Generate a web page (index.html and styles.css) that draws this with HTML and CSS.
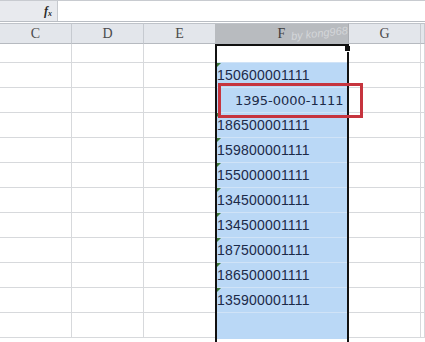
FILE: index.html
```html
<!DOCTYPE html>
<html>
<head>
<meta charset="utf-8">
<link rel="stylesheet" href="styles.css">
</head>
<body>
<div class="fbar">
  <div class="fx-box"><span class="fx">f<sub>x</sub></span></div>
  <div class="finput"></div>
</div>
<div class="gap"></div>
<div class="sheet">
  <div class="col w72">
    <div class="hdr">C</div>
    <div class="cell r1"></div>
    <div class="cell"></div><div class="cell"></div><div class="cell"></div><div class="cell"></div>
    <div class="cell"></div><div class="cell"></div><div class="cell"></div><div class="cell"></div>
    <div class="cell"></div><div class="cell"></div><div class="cell"></div>
  </div>
  <div class="col w72">
    <div class="hdr">D</div>
    <div class="cell r1"></div>
    <div class="cell"></div><div class="cell"></div><div class="cell"></div><div class="cell"></div>
    <div class="cell"></div><div class="cell"></div><div class="cell"></div><div class="cell"></div>
    <div class="cell"></div><div class="cell"></div><div class="cell"></div>
  </div>
  <div class="col w72">
    <div class="hdr">E</div>
    <div class="cell r1"></div>
    <div class="cell"></div><div class="cell"></div><div class="cell"></div><div class="cell"></div>
    <div class="cell"></div><div class="cell"></div><div class="cell"></div><div class="cell"></div>
    <div class="cell"></div><div class="cell"></div><div class="cell"></div>
  </div>
  <div class="col fcol">
    <div class="hdr hdr-sel">F<span class="wm">by kong968</span></div>
    <div class="fbody">
      <div class="fcell r1 active"></div>
      <div class="fcell num tri">150600001111</div>
      <div class="fcell num dash">1395-0000-1111</div>
      <div class="fcell num tri">186500001111</div>
      <div class="fcell num tri">159800001111</div>
      <div class="fcell num tri">155000001111</div>
      <div class="fcell num tri">134500001111</div>
      <div class="fcell num tri">134500001111</div>
      <div class="fcell num tri">187500001111</div>
      <div class="fcell num tri">186500001111</div>
      <div class="fcell num tri">135900001111</div>
      <div class="fcell last"></div>
      <div class="handle"></div>
      <div class="redbox"></div>
    </div>
  </div>
  <div class="col w72">
    <div class="hdr">G</div>
    <div class="cell r1"></div>
    <div class="cell"></div><div class="cell"></div><div class="cell"></div><div class="cell"></div>
    <div class="cell"></div><div class="cell"></div><div class="cell"></div><div class="cell"></div>
    <div class="cell"></div><div class="cell"></div><div class="cell"></div>
  </div>
  <div class="col rest">
    <div class="hdr"></div>
    <div class="cell r1"></div>
    <div class="cell"></div><div class="cell"></div><div class="cell"></div><div class="cell"></div>
    <div class="cell"></div><div class="cell"></div><div class="cell"></div><div class="cell"></div>
    <div class="cell"></div><div class="cell"></div><div class="cell"></div>
  </div>
</div>
</body>
</html>
```

FILE: styles.css
```css
html, body {
  margin: 0;
  padding: 0;
}
body {
  width: 425px;
  height: 342px;
  overflow: hidden;
  background: #ffffff;
  font-family: "Liberation Sans", Arial, sans-serif;
}
.fbar {
  display: flex;
  height: 22px;
  box-sizing: border-box;
  border-top: 1px solid #c8cbd0;
  border-bottom: 1px solid #b9bdc3;
}
.fx-box {
  width: 58px;
  background: #e8eaee;
  border-right: 1px solid #c6c9ce;
  display: flex;
  justify-content: flex-end;
  align-items: center;
  padding-right: 5px;
  box-sizing: border-box;
}
.fx {
  font-family: "Liberation Serif", serif;
  font-style: italic;
  font-weight: bold;
  font-size: 12px;
  color: #2a2a2a;
  line-height: 1;
}
.fx sub {
  font-size: 8px;
  vertical-align: -1px;
}
.finput {
  flex: 1;
  background: #fff;
}
.gap {
  height: 1px;
}
.sheet {
  display: flex;
  height: 319px;
  overflow: hidden;
}
.col {
  display: flex;
  flex-direction: column;
  flex: none;
}
.w72 {
  width: 72px;
}
.rest {
  flex: 1;
}
.hdr {
  height: 21px;
  box-sizing: border-box;
  background: #e3e6eb;
  border-top: 1px solid #bfc3c9;
  border-bottom: 1px solid #b6bac0;
  border-right: 1px solid #c6cad0;
  display: flex;
  align-items: center;
  justify-content: center;
  font-family: "Liberation Serif", serif;
  font-size: 14px;
  color: #4b4b4b;
  position: relative;
  overflow: hidden;
  flex: none;
}
.cell {
  height: 25px;
  box-sizing: border-box;
  border-right: 1px solid #d7d9dc;
  border-bottom: 1px solid #d7d9dc;
  flex: none;
}
.cell.r1 {
  height: 19px;
}
.fcol {
  width: 133px;
}
.hdr-sel {
  background: #b8bbbf;
  border-right: 1px solid #a9acb1;
  width: 134px;
  margin-left: -1px;
  color: #3c3c3c;
}
.wm {
  position: absolute;
  left: 76px;
  top: 3px;
  font-family: "Liberation Sans", sans-serif;
  font-size: 11px;
  line-height: 13px;
  font-style: italic;
  color: rgba(255, 255, 255, 0.4);
  transform: rotate(-6deg);
  white-space: nowrap;
}
.fbody {
  position: relative;
  border: 2px solid #111;
  border-bottom: none;
  margin-left: -1px;
  width: 134px;
  box-sizing: border-box;
  flex: 1;
}
.fcell {
  height: 25px;
  box-sizing: border-box;
  background: #bad8f6;
  border-bottom: 1px solid #d0e3f7;
  position: relative;
  display: flex;
  align-items: center;
  flex: none;
}
.fcell.r1 {
  height: 17px;
}
.fcell.active {
  background: #ffffff;
}
.fcell.last {
  height: 26px;
  border-bottom: none;
}
.num {
  font-family: "Liberation Sans", Arial, sans-serif;
  font-size: 14px;
  letter-spacing: 0.2px;
  color: #1c2a48;
}
.num.dash {
  font-family: "DejaVu Sans", sans-serif;
  font-size: 13px;
  letter-spacing: 0;
  padding-left: 18px;
}
.tri::before {
  content: "";
  position: absolute;
  left: 0;
  top: 0;
  border-top: 4px solid #3d7a3a;
  border-right: 4px solid transparent;
}
.handle {
  position: absolute;
  right: -4px;
  top: 0;
  width: 5px;
  height: 5px;
  background: #111;
  border: 1px solid #fff;
  border-top: none;
}
.redbox {
  position: absolute;
  left: 1px;
  top: 37px;
  width: 145px;
  height: 35px;
  box-sizing: border-box;
  border: 3px solid #c6343e;
}
```
